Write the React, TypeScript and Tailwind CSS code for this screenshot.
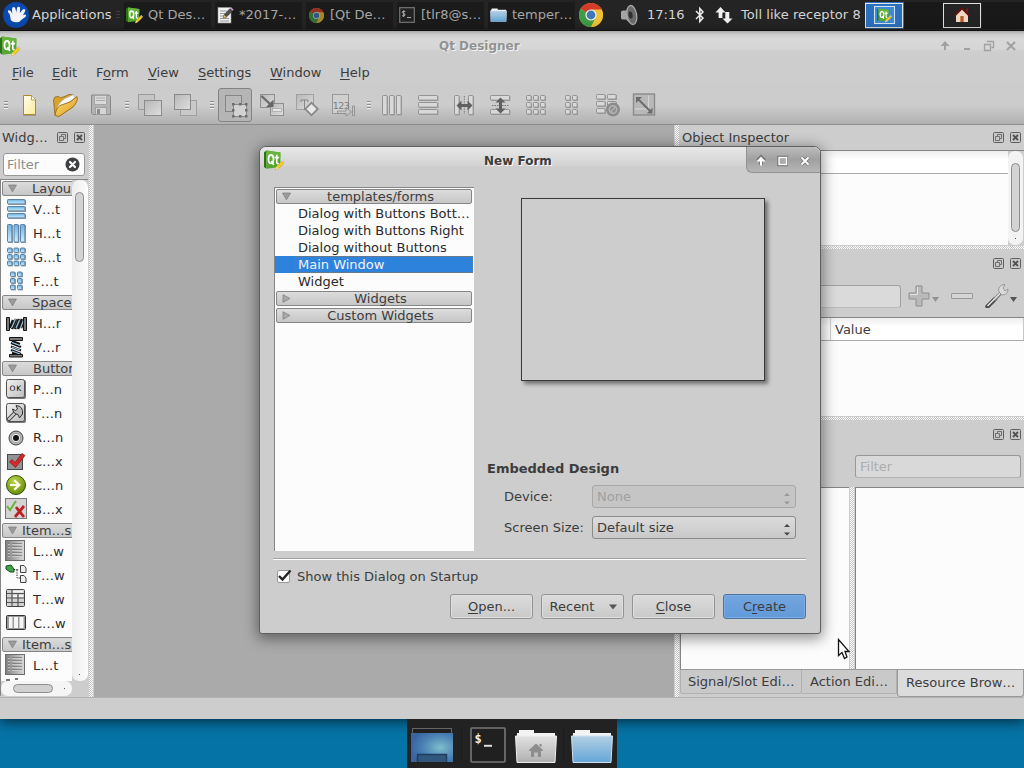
import React from "react";

type IconProps = { size?: number; className?: string };
type Box = { children: React.ReactNode; w: number; h: number; className?: string };

function Svg({ children, w, h, className = "" }: Box) {
  return (
    <svg width={w} height={h} viewBox={`0 0 ${w} ${h}`} className={`block shrink-0 ${className}`}>
      {children}
    </svg>
  );
}

function Gradients() {
  return (
    <svg width="0" height="0" className="absolute">
      <defs>
        <linearGradient id="tile" x1="0" y1="0" x2="1" y2="1">
          <stop offset="0" stopColor="#b7b7b7" />
          <stop offset="1" stopColor="#dedede" />
        </linearGradient>
        <linearGradient id="blue" x1="0" y1="0" x2="0" y2="1">
          <stop offset="0" stopColor="#68b0e2" />
          <stop offset="1" stopColor="#d2f0ff" />
        </linearGradient>
        <linearGradient id="paper" x1="0" y1="0" x2="1" y2="1">
          <stop offset="0" stopColor="#fffef0" />
          <stop offset="1" stopColor="#fbeb98" />
        </linearGradient>
        <linearGradient id="gold" x1="0" y1="0" x2="1" y2="1">
          <stop offset="0" stopColor="#ffe27a" />
          <stop offset="1" stopColor="#d99a1c" />
        </linearGradient>
        <linearGradient id="metal" x1="0" y1="0" x2="1" y2="0">
          <stop offset="0" stopColor="#808080" />
          <stop offset="1" stopColor="#dadada" />
        </linearGradient>
        <linearGradient id="button" x1="0" y1="0" x2="1" y2="1">
          <stop offset="0" stopColor="#f2f2f2" />
          <stop offset="1" stopColor="#bdbdbd" />
        </linearGradient>
        <linearGradient id="folderBlue" x1="0" y1="0" x2="0" y2="1">
          <stop offset="0" stopColor="#b4cfe4" />
          <stop offset="1" stopColor="#64a6d8" />
        </linearGradient>
        <linearGradient id="folderGray" x1="0" y1="0" x2="0" y2="1">
          <stop offset="0" stopColor="#e2e2e2" />
          <stop offset="1" stopColor="#b0b0b0" />
        </linearGradient>
        <radialGradient id="desk" cx="0.7" cy="0.5" r="0.7">
          <stop offset="0" stopColor="#7dbdcc" />
          <stop offset="0.6" stopColor="#4b82b4" />
          <stop offset="1" stopColor="#3a65a2" />
        </radialGradient>
        <radialGradient id="go" cx="0.4" cy="0.3" r="0.8">
          <stop offset="0" stopColor="#bcd648" />
          <stop offset="1" stopColor="#5f8404" />
        </radialGradient>
      </defs>
    </svg>
  );
}

function QtIcon({ size = 20, className = "" }: IconProps) {
  return (
    <svg width={size} height={size} viewBox="0 0 21 21" className={`block shrink-0 ${className}`}>
      <path d="M0 2.2 2.4 0.6V18.8L0 17Z" fill="#2c7317" />
      <path d="M2.4 0.6 16.4 2.4V17L2.4 18.8Z" fill="#53a72c" />
      <path d="M2.4 0.6 16.4 2.4V8L2.4 10Z" fill="#66b53a" />
      <ellipse cx="7" cy="9.2" rx="2.5" ry="4.2" fill="none" stroke="#fff" strokeWidth="1.8" />
      <path d="M7.4 11 9.8 15" stroke="#fff" strokeWidth="1.6" />
      <path d="M12.8 4.8V12.6Q12.8 14 14.8 13.6M10.8 7.6H15" fill="none" stroke="#fff" strokeWidth="1.6" />
      <path d="M11.5 19.8 12.6 16.6 17.8 11.2 20 13.2 14.4 18.6Z" fill="#f5cf1d" stroke="#d19b14" strokeWidth="0.5" />
      <path d="M17.8 11.2 19 9.9 21 12 20 13.2Z" fill="#e9b9cf" />
      <path d="M11.5 19.8 12.6 16.6 14.4 18.6Z" fill="#f4dcae" />
    </svg>
  );
}

function Chrome({ size = 24 }: IconProps) {
  return (
    <svg width={size} height={size} viewBox="0 0 24 24" className="block shrink-0">
      <circle cx="12" cy="12" r="12" fill="#e8b42c" />
      <path d="M12 12 1.6 6A12 12 0 0 1 22.4 6L23 7.4H12Z" fill="#d43b2b" />
      <path d="M12 12 1.6 6A12 12 0 0 0 12 24L17 15Z" fill="#3f9b45" />
      <path d="M12 6.6H22.7A12 12 0 0 1 12 24L16.6 14.8Z" fill="#f0c132" />
      <circle cx="12" cy="12" r="5.6" fill="#f2f2f2" />
      <circle cx="12" cy="12" r="4.4" fill="#3f78b5" />
    </svg>
  );
}

function Terminal() {
  return (
    <Svg w={16} h={16}>
      <rect x="0.7" y="0.7" width="14.6" height="14.6" fill="#222" stroke="#777" strokeWidth="1.2" />
      <path d="M6.3 4.4H4.2Q3 4.4 3.4 5.6L5.8 7Q6.4 8.8 4.8 8.8H3M4.7 3.2V10M8 10.5H12" stroke="#aaa" fill="none" />
    </Svg>
  );
}

function Note() {
  return (
    <Svg w={17} h={17}>
      <rect x="1" y="0.5" width="13" height="15.5" fill="#f2f2f2" stroke="#999" strokeWidth="0.6" />
      <path d="M3 4H10M3 6.5H8M3 9H7M3 11.5H12M3 14H12" stroke="#999" />
      <path d="M6.2 11 7 8 13 1.5 15.8 3.8 9.4 10Z" fill="#4f4f4f" stroke="#262626" strokeWidth="0.6" />
      <path d="M13 1.5 14.2 0.4 16.6 2.6 15.8 3.8Z" fill="#d6a3d9" />
      <path d="M6.2 11 7 8 9.4 10Z" fill="#edc565" />
    </Svg>
  );
}

function Folder({ w, h, home }: { w: number; h: number; home?: boolean }) {
  return (
    <svg width={w} height={h} viewBox="0 0 42 34" className="block shrink-0">
      <path d="M2 8V4H4V1H19V4H40V8Z" fill="#f3f3f3" />
      <path d="M0.5 7H41.5L40 33.5H2Z" fill={home ? "url(#folderGray)" : "url(#folderBlue)"} stroke={home ? "#eee" : "#cfe2ef"} strokeWidth="1" />
      {home && <path d="M21 14.5 28 21V22H26V28H22.8V23.5H19.2V28H16V22H14V21ZM24.5 15H26.5V18L24.5 17Z" fill="#8d8d8d" />}
    </svg>
  );
}

function TaskButton({ icon, label }: { icon: React.ReactNode; label: string }) {
  return (
    <div className="mr-1 flex h-[27px] w-[87px] shrink-0 items-center bg-[#1b1b1b] pl-[2px] text-[#a6a6a6]">
      <span className="flex w-[22px] shrink-0">{icon}</span>
      <span className="whitespace-nowrap pb-[2px]">{label}</span>
    </div>
  );
}

function TopPanel() {
  return (
    <div className="flex h-[31px] shrink-0 items-center border-b border-[#141414] bg-[#242424] text-[#d4d4d4]">
      <div className="ml-[3px] w-[26px]">
        <Svg w={26} h={26}>
          <circle cx="13" cy="13" r="13" fill="#0a4bb0" />
          <path d="M5 8.5Q7 7.5 8.5 10L9.3 12 9 8Q8.8 5.2 10.6 5 12 4.8 12.6 7.3L13.3 10.5 14 6.2Q14.4 4.4 16 4.8 17.5 5.2 17.1 7.2L16.8 11 19.5 7.7Q21 6.4 22 7.5 22.8 8.3 21.7 10L19.8 13.5Q22 12 23 13 23.6 14 22 15.2L18.8 17.5Q16 21 12.5 20.2 7 19.5 7.5 16L6.5 11.8Q4.3 10.4 5 8.5Z" fill="#f4f4f4" />
        </Svg>
      </div>
      <span className="ml-[3px] w-[83px] pb-[2px]">Applications</span>
      <Svg w={9} h={12}><path d="M1 2.5H5M1 5.5H5M1 8.5H5" stroke="#3d3d3d" /></Svg>
      <TaskButton icon={<QtIcon size={17} />} label="Qt Des…" />
      <TaskButton icon={<Note />} label="*2017-…" />
      <TaskButton icon={<span className="ml-[1px] opacity-65"><Chrome size={15} /></span>} label="[Qt De…" />
      <TaskButton icon={<Terminal />} label="[tlr8@s…" />
      <TaskButton icon={<Folder w={17} h={14} />} label="temper…" />
      <Chrome />
      <Svg w={18} h={22} className="ml-[17px]">
        <path d="M1 8Q1 6.5 3 6.5H6L11 2V20L6 15.5H3Q1 15.5 1 14Z" fill="#a5a5a5" />
        <ellipse cx="11.8" cy="11" rx="4.8" ry="9.6" fill="#6b6b6b" stroke="#a9a9a9" strokeWidth="1.3" transform="rotate(-10 11.8 11)" />
        <ellipse cx="10.6" cy="11" rx="2" ry="3.6" fill="#303030" transform="rotate(-10 10.6 11)" />
      </Svg>
      <span className="ml-[9px] w-[48px] pb-[2px]">17:16</span>
      <Svg w={10} h={18}><path d="M1 5 8 12 4.8 15.5V2.5L8 6 1 13" fill="none" stroke="#ededed" strokeWidth="1.5" /></Svg>
      <Svg w={18} h={18} className="ml-[10px]">
        <path d="M0.5 6.5 5.5 1 10.5 6.5H7.4V12H3.6V6.5ZM7.5 12.5H10.3V6H14.3V12.5H17.5L12.5 17.5Z" fill="#f0f0f0" />
      </Svg>
      <span className="ml-[8px] w-[124px] whitespace-nowrap pb-[2px] tracking-[0.05px]">Toll like receptor 8</span>
      <div className="flex h-[27px] w-[39px] items-start border-b-2 border-[#28547f] bg-[#2b70bd]">
        <div className="mt-[1px] flex h-[25px] w-[38px] items-center justify-center border border-[#e4e4e4]">
          <div className="flex h-[18px] w-[21px] items-center justify-center border border-[#d4e4f5] bg-[#3989df]"><QtIcon size={15} /></div>
        </div>
      </div>
      <div className="h-[27px] w-[39px] bg-[#191919]" />
      <div className="flex h-[25px] w-[38px] items-center justify-center border border-[#e0e0e0]">
        <Svg w={16} h={16}>
          <path d="M2 8 8 2 14 8V15H2Z" fill="#efd9c3" />
          <path d="M0.8 8.5 8 1.4 15.2 8.5" fill="none" stroke="#651010" strokeWidth="2" />
          <path d="M12 1.5H14V6L12 4Z" fill="#74201a" />
          <rect x="6.3" y="9" width="3.4" height="6" fill="#b95e2d" />
        </Svg>
      </div>
      <div className="ml-[1px] h-[27px] grow bg-[#191919]" />
    </div>
  );
}

function Grip() {
  return <Svg w={4} h={10}><path d="M0 1.5H4M0 4.5H4M0 7.5H4" stroke="#8d8d8d" /><path d="M0 2.5H4M0 5.5H4M0 8.5H4" stroke="#eee" /></Svg>;
}

function Tiles({ rects, fill, stroke }: { rects: number[][]; fill: string; stroke: string }) {
  return <>{rects.map(([x, y, w, h], i) => <rect key={i} x={x} y={y} width={w} height={h} rx="0.8" fill={fill} stroke={stroke} strokeWidth="1" />)}</>;
}

const gridRects = (xs: number[], ys: number[], w: number, h: number) => ys.flatMap((y) => xs.map((x) => [x, y, w, h]));
const columns = gridRects([1.5, 8.5, 15.5], [1.5], 4.6, 19);
const rows = gridRects([1.5], [1.5, 8.5, 15.5], 19, 4.6);
const grid9 = gridRects([1.5, 8.5, 15.5], [1.5, 8.5, 15.5], 4.6, 4.6);
const grid6 = gridRects([4.5, 11.5], [1.5, 8.5, 15.5], 4.6, 4.6);

function Gray({ rects }: { rects: number[][] }) {
  return (
    <>
      {rects.map(([x, y, w, h], i) => <rect key={i} x={x + 0.5} y={y + 0.5} width={w + 0.4} height={h + 0.4} fill="#9a9a9a" />)}
      <Tiles rects={rects} fill="#d8d8d8" stroke="#949494" />
    </>
  );
}

const toolbarIcons: Record<string, React.ReactNode> = {
  new: (
    <>
      <path d="M5 3H14L18 7V22H5Z" fill="#00000030" />
      <path d="M5.5 1.5H13.5L17.5 5.5V20.5H5.5Z" fill="url(#paper)" stroke="#a98a2c" />
      <path d="M13.5 1.5V6H17.5" fill="#fff" stroke="#a98a2c" strokeWidth="0.8" />
    </>
  ),
  open: (
    <>
      <path d="M-0.5 6 1 3 5 2.5 6.5 4 13 1.5 15 0.5 19 0.8 4 21.5 1 21Z" fill="#d9a22a" stroke="#8e6410" strokeWidth="0.8" />
      <path d="M3 13Q8 5 13 3.5L19.5 0.5 21 4 8 13 4 18Z" fill="#f6f6f6" stroke="#a9a9a9" strokeWidth="0.6" />
      <path d="M1 21.5Q2 14 6 11.5L16 8 23 2.5Q24.5 7 19 13L5 22.5Z" fill="url(#gold)" stroke="#99690f" strokeWidth="0.9" />
    </>
  ),
  save: (
    <>
      <path d="M1.5 1H19L20.5 2.5V20.5H3L1.5 19Z" fill="#b3b3b3" stroke="#898989" />
      <rect x="4.5" y="1.5" width="12" height="9" fill="#dadada" stroke="#999" strokeWidth="0.7" />
      <path d="M6 4H15M6 6.5H15" stroke="#aaa" />
      <rect x="5.5" y="13.5" width="11" height="7" fill="#d6d6d6" stroke="#929292" strokeWidth="0.7" />
      <rect x="7" y="15" width="3" height="5" fill="#8c8c8c" />
    </>
  ),
  front: (
    <>
      <rect x="-0.5" y="0.5" width="16" height="15" fill="#c5c5c5" stroke="#9b9b9b" />
      <rect x="5.5" y="6.5" width="17" height="15" fill="url(#tile)" stroke="#8b8b8b" />
    </>
  ),
  back: (
    <>
      <rect x="5.5" y="6.5" width="16" height="15" fill="#c9c9c9" stroke="#9f9f9f" />
      <rect x="-0.5" y="0.5" width="16" height="15" fill="url(#tile)" stroke="#8b8b8b" />
    </>
  ),
  widgets: (
    <>
      <rect x="1.5" y="1.5" width="16" height="16" fill="#b9b9b9" stroke="#858585" />
      <rect x="9.5" y="10.5" width="13" height="12" fill="#d2d2d2" stroke="#888" />
      {[9, 16, 22].flatMap((x) => [10, 16, 22].map((y) => (x === 16 && y === 16 ? null : <rect key={`${x}-${y}`} x={x - 1} y={y - 1} width="2.5" height="2.5" fill="#6d6d6d" />)))}
    </>
  ),
  signals: (
    <>
      <rect x="0.5" y="0.5" width="14" height="13" fill="url(#tile)" stroke="#8f8f8f" />
      <rect x="10.5" y="9.5" width="13" height="12" fill="url(#tile)" stroke="#8f8f8f" />
      <rect x="12.5" y="14.5" width="9" height="3" fill="#e6e6e6" stroke="#999" strokeWidth="0.6" />
      <path d="M1.5 2 10 10" stroke="#6a6a6a" strokeWidth="2.2" />
      <path d="M13.5 13V5.5L6 13Z" fill="#666" />
    </>
  ),
  buddies: (
    <>
      <rect x="0.5" y="0.5" width="17" height="15" fill="url(#tile)" stroke="#a0a0a0" />
      <path d="M5 8V6H12V8M8.5 6V16" stroke="#888" fill="none" />
      <path d="M15.5 7.5 23 15 15.5 22.5 8 15Z" fill="#888" />
      <path d="M15.5 10 20.5 15 15.5 20 10.5 15Z" fill="#e8e8e8" />
    </>
  ),
  taborder: (
    <>
      <rect x="0.5" y="0.5" width="16" height="19" fill="#d0d0d0" stroke="#999" />
      <text x="0.7" y="15" fontSize="9.5" fill="#7d7d7d" fontFamily="DejaVu Sans, sans-serif" textLength="17">123</text>
      <path d="M5.5 17H14V13.5L19.5 18 14 22V19.5H5.5ZM20.5 12V21.5H22.5V12Z" fill="#c7c7c7" stroke="#888" strokeWidth="0.8" />
    </>
  ),
  columns: <Gray rects={columns} />,
  rows: <Gray rects={rows} />,
  hsplit: (
    <>
      <Gray rects={gridRects([1.5, 15.5], [1.5], 4.6, 19)} />
      <path d="M11.3 2V20" stroke="#777" strokeDasharray="1.5 1" />
      <path d="M3.5 11.5 8.5 6.5V10H14.5V6.5L19.5 11.5 14.5 16.5V13H8.5V16.5Z" fill="#606060" />
    </>
  ),
  vsplit: (
    <>
      <Gray rects={gridRects([1.5], [1.5, 15.5], 19, 4.6)} />
      <path d="M3 11.5H20" stroke="#777" strokeDasharray="1.5 1" />
      <path d="M11.5 3.5 16.5 8.5H13V14.5H16.5L11.5 19.5 6.5 14.5H10V8.5H6.5Z" fill="#606060" />
    </>
  ),
  grid: <Gray rects={grid9} />,
  form: <Gray rects={grid6} />,
  breakl: (
    <>
      <Gray rects={[[-0.5, 0.5, 8.5, 4.5], [10.5, 0.5, 8.5, 4.5], [-0.5, 7.5, 8.5, 4.5], [10.5, 7.5, 8.5, 4.5], [-0.5, 14.5, 8.5, 4.5]]} />
      <circle cx="16" cy="15.5" r="7" fill="#8c8c8c" />
      <circle cx="16" cy="15.5" r="3.7" fill="none" stroke="#b4b4b4" strokeWidth="1.5" />
      <path d="M13.5 18 18.5 13" stroke="#b4b4b4" strokeWidth="1.5" />
    </>
  ),
  adjust: (
    <>
      <rect x="0.5" y="0" width="21" height="21" fill="#b8b8b8" stroke="#8b8b8b" strokeWidth="1.4" />
      <path d="M1.5 15H15.5V1.5M15 15V20" stroke="#d6d6d6" fill="none" />
      <path d="M4 4 18 18" stroke="#6c6c6c" strokeWidth="2" />
      <path d="M3 3H9L3 9ZM19.5 19.5H13.5L19.5 13.5Z" fill="#6c6c6c" />
    </>
  ),
};

function ToolButton({ name, pressed }: { name: string; pressed?: boolean }) {
  return (
    <div className={`flex h-[34px] shrink-0 items-center justify-center ${pressed ? "mx-[1px] w-[34px] rounded-[3px] border border-[#838383] bg-[#b5b5b5]" : "w-9"}`}>
      <svg width="23" height="23" viewBox="0 0 23 23" className="block overflow-visible">{toolbarIcons[name]}</svg>
    </div>
  );
}

function Toolbar() {
  const gap = <div className="flex w-[13px] justify-center pl-[3px]"><Grip /></div>;
  return (
    <div className="flex h-[40px] shrink-0 items-center border-b border-[#8c8c8c] bg-linear-to-b from-[#cbcbcb] via-[#cdcdcd] via-50% to-[#b1b1b1] pt-[1px]">
      <div className="flex w-[11px] pl-1"><Grip /></div>
      {["new", "open", "save"].map((n) => <ToolButton key={n} name={n} />)}
      {gap}
      {["front", "back"].map((n) => <ToolButton key={n} name={n} />)}
      {gap}
      <ToolButton name="widgets" pressed />
      {["signals", "buddies", "taborder"].map((n) => <ToolButton key={n} name={n} />)}
      {gap}
      {["columns", "rows", "hsplit", "vsplit", "grid", "form", "breakl", "adjust"].map((n) => <ToolButton key={n} name={n} />)}
    </div>
  );
}

function Mn({ text, at }: { text: string; at: number }) {
  return <>{text.slice(0, at)}<span className="underline decoration-1 underline-offset-[2px]">{text[at]}</span>{text.slice(at + 1)}</>;
}

function TitleBar() {
  return (
    <div className="flex h-[29px] shrink-0 items-start bg-[linear-gradient(to_bottom,#a6a6a6_0,#c9c9c9_3px,#d8d8d8_8px,#d6d6d6_18px,#cecece_20px,#cdcdcd_29px)] pt-[5px]">
      <div className="w-[439px]"><QtIcon size={21} /></div>
      <div className="w-[501px] text-[12px] font-bold leading-[21px] text-[#929292] [text-shadow:1px_1px_0_#f4f4f4]">Qt Designer</div>
      <Svg w={80} h={22}>
        <path d="M4 14V10H0.5L5 5 9.5 10H6V14Z" fill="#a1a1a1" />
        <rect x="24" y="12" width="6" height="2" fill="#a1a1a1" />
        <path d="M47.5 6V5.5H53.5V11.5H51.5M44.5 8.5H50.5V14.5H44.5Z" fill="none" stroke="#a1a1a1" strokeWidth="1.3" />
        <path d="M67 6 75 14M75 6 67 14" stroke="#a1a1a1" strokeWidth="2" />
      </Svg>
    </div>
  );
}

function MenuBar() {
  const items: [string, number, string][] = [
    ["File", 0, "w-[40px]"], ["Edit", 0, "w-[44px]"], ["Form", 1, "w-[52px]"], ["View", 0, "w-[50px]"],
    ["Settings", 0, "w-[72px]"], ["Window", 0, "w-[70px]"], ["Help", 0, "w-[50px]"],
  ];
  return (
    <div className="flex h-[25px] shrink-0 pl-3 leading-[26px]">
      {items.map(([t, at, w]) => <span key={t} className={w}><Mn text={t} at={at} /></span>)}
    </div>
  );
}

function DockButtons() {
  return (
    <Svg w={28} h={11}>
      <rect x="0.5" y="0.5" width="10" height="10" rx="1" fill="#c8c8c8" stroke="#606060" />
      <path d="M4.5 2.5H8.5V6.5H6.5V8.5H2.5V4.5H4.5ZM4.5 4.5H6.5V6.5" fill="none" stroke="#666" strokeWidth="0.9" />
      <rect x="17.5" y="0.5" width="10" height="10" rx="1" fill="#c8c8c8" stroke="#606060" />
      <path d="M20 3 25 8M25 3 20 8" stroke="#505050" strokeWidth="1.8" />
    </Svg>
  );
}

function VSplit() {
  return <div className="w-[6px] shrink-0 bg-[#cdcdcd] px-[1px]"><div className="h-full bg-[conic-gradient(#fff_25%,#c4c4c4_0_50%,#fff_0_75%,#c4c4c4_0)] bg-[length:2px_2px]" /></div>;
}
function HSplit() {
  return <div className="h-[6px] shrink-0 bg-[#cdcdcd] pt-[1px]"><div className="h-[3px] bg-[conic-gradient(#fff_25%,#c4c4c4_0_50%,#fff_0_75%,#c4c4c4_0)] bg-[length:2px_2px]" /></div>;
}

function Category({ label, open = true, align }: { label: string; open?: boolean; align: string }) {
  return (
    <div className="flex h-[15px] min-w-0 grow items-center rounded-[2px] border border-[#868686] bg-linear-to-b from-[#dcdcdc] to-[#c7c7c7] pl-[5px] leading-[13px]">
      <Svg w={9} h={9}>
        {open ? <path d="M0.5 1H8.5L4.5 7.8Z" fill="#9b9b9b" stroke="#7b7b7b" strokeWidth="0.7" /> : <path d="M1 0.7 8 4.5 1 8.3Z" fill="#a8a8a8" stroke="#7b7b7b" strokeWidth="0.7" />}
      </Svg>
      <span className={`whitespace-nowrap text-[#3c3c3c] ${align}`}>{label}</span>
    </div>
  );
}

const blueTiles = (rects: number[][]) => (
  <>
    {rects.map(([x, y, w, h], i) => <rect key={i} x={x + 0.5} y={y + 0.5} width={w + 0.5} height={h + 0.5} fill="#8894a0" />)}
    <Tiles rects={rects} fill="url(#blue)" stroke="#5c80a4" />
  </>
);

const listIcon = (
  <>
    <rect x="0.5" y="0.5" width="19" height="20" fill="url(#metal)" stroke="#6d6d6d" />
    <path d="M3 3.5H5M3 6.5H5M3 9.5H5M3 12.5H5M3 15.5H5M7 3.5H17M7 6.5H17M7 9.5H17M7 12.5H17M7 15.5H17" stroke="#777" strokeWidth="0.8" />
    <path d="M3 4.5H5M3 7.5H5M3 10.5H5M3 13.5H5M3 16.5H5M7 4.5H17M7 7.5H17M7 10.5H17M7 13.5H17M7 16.5H17" stroke="#d6d6d6" strokeWidth="0.7" />
  </>
);
const button = <><rect x="2" y="2" width="19" height="19" rx="2" fill="#777" /><rect x="1.5" y="1.5" width="18" height="18" rx="2" fill="url(#button)" stroke="#505050" /></>;

const widgetIcons: Record<string, React.ReactNode> = {
  v: blueTiles(gridRects([2.5], [1.5, 8.5, 15.5], 17.5, 4.4)),
  h: blueTiles(gridRects([2.5, 9, 15.5], [2.5], 4.4, 17.5)),
  g: blueTiles(gridRects([2.5, 9, 15.5], [2, 8.5, 15], 4.4, 4.4)),
  f: blueTiles(gridRects([5.5, 12.5], [2, 8.5, 15], 4.4, 4.4)),
  hs: (
    <>
      <path d="M5 16 8 8M7 17 11 7M10 17 14 7M13 17 17 7M16 16 19 8" stroke="#151515" strokeWidth="2.6" fill="none" />
      <path d="M6.5 16 10.5 7M11 16 14.5 8M15.5 16 18.5 8" stroke="#9cc7df" strokeWidth="1.2" />
      <path d="M1.5 5.5H4.5V18.5H1.5ZM18.5 5.5H21.5V18.5H18.5Z" fill="#777" stroke="#151515" />
    </>
  ),
  vs: (
    <>
      <path d="M7 5 15 8M6 7 16 11M6 10.5 16 14.5M6 14 16 18M7 17 13 19" stroke="#151515" strokeWidth="2.4" fill="none" />
      <path d="M7 6.5 15 9.5M7 11 15 14M7 15 15 18" stroke="#9cc7df" strokeWidth="1.2" />
      <path d="M4.5 1.5H17.5V4.5H4.5ZM4.5 18.5H17.5V21H4.5Z" fill="#777" stroke="#151515" />
    </>
  ),
  ok: <>{button}<text x="4.6" y="12.6" fontSize="7.5" fill="#000" fontFamily="DejaVu Sans, sans-serif" textLength="11.5">OK</text></>,
  tool: (
    <>
      {button}
      <path d="M4 17 10 11" stroke="#444" strokeWidth="4" strokeLinecap="round" /><path d="M4 17 10 11" stroke="#d0d0d0" strokeWidth="2.2" strokeLinecap="round" />
      <path d="M11 3.5 12.5 7 10.5 8.5 7.5 7Q8 11 11 12L13 12.5 14.5 16 17.5 12Q18.5 4 11 3.5Z" fill="#bcbcbc" stroke="#333" />
    </>
  ),
  radio: <><circle cx="11" cy="12" r="7" fill="#b5b5b5" stroke="#414141" /><circle cx="11" cy="12" r="4.6" fill="#eee" stroke="#888" strokeWidth="0.7" /><circle cx="11" cy="12" r="3" fill="#111" /></>,
  check: <><rect x="2.5" y="4.5" width="15" height="15" fill="#929292" stroke="#474747" /><path d="M4.5 12 7 9.5 10 12.5 17 3.5 20 5.5 10.5 17.5Z" fill="#d62929" stroke="#861515" strokeWidth="0.7" /></>,
  go: <><circle cx="11" cy="11" r="9.5" fill="url(#go)" stroke="#38500b" /><path d="M5 10H11.5L8.5 7 10 5.5 16 11 10 16.5 8.5 15 11.5 12H5Z" fill="#fafbe6" /></>,
  box: <><rect x="0.5" y="0.5" width="21" height="20" fill="#d3d3d3" stroke="#777" /><path d="M2 8 5 12 11 3" fill="none" stroke="#66b537" strokeWidth="2" /><path d="M11 9 19 19M19 8 10 19" stroke="#bd2020" strokeWidth="2.8" /></>,
  list: listIcon,
  tree: (
    <>
      <path d="M1 2 6 1 9 5V8H5L1 5Z" fill="#44a04a" stroke="#12541a" /><path d="M9 5.5H14M12 6V14H15" stroke="#222" strokeDasharray="1.2 1.2" fill="none" />
      <path d="M15.5 1.5H19L21 4V8.5H15.5ZM15.5 11.5H19L21 14V18.5H15.5Z" fill="#eee" stroke="#444" />
    </>
  ),
  table: <><rect x="1.5" y="1.5" width="18" height="17" rx="1" fill="#d1d1d1" stroke="#444" /><path d="M2 5.5H19M2 10H19M2 14.5H19M7 2V18M13 6V18" stroke="#555" strokeWidth="1.2" /><path d="M8 3.5H18M8 8H12M14 8H18" stroke="#f2f2f2" strokeWidth="1.8" /></>,
  cols: <><rect x="1.5" y="3.5" width="19" height="14" rx="1" fill="#999" stroke="#333" /><path d="M4 5H7.5V16H4ZM9 5H13V16H9ZM14.5 5H18.5V16H14.5Z" fill="#f5f5f5" /></>,
};

function WidgetItems({ items }: { items: [string, string][] }) {
  return (
    <>
      {items.map(([icon, label], i) => (
        <div key={i} className="flex h-6 shrink-0 items-center pl-1 text-[#2c2c2c]">
          <svg width="22" height="22" viewBox="0 0 22 22" className="mr-[6px] shrink-0">{widgetIcons[icon]}</svg>
          <span>{label}</span>
        </div>
      ))}
    </>
  );
}

function WidgetBox() {
  const groups: { label: string; align: string; items: [string, string][] }[] = [
    { label: "Layou", align: "ml-[15px]", items: [["v", "V…t"], ["h", "H…t"], ["g", "G…t"], ["f", "F…t"]] },
    { label: "Space", align: "ml-[15px]", items: [["hs", "H…r"], ["vs", "V…r"]] },
    { label: "Buttor", align: "ml-[16px]", items: [["ok", "P…n"], ["tool", "T…n"], ["radio", "R…n"], ["check", "C…x"], ["go", "C…n"], ["box", "B…x"]] },
    { label: "Item…s", align: "ml-[5px]", items: [["list", "L…w"], ["tree", "T…w"], ["table", "T…w"], ["cols", "C…w"]] },
    { label: "Item…s", align: "ml-[5px]", items: [["list", "L…t"]] },
  ];
  return (
    <div className="flex w-[88px] shrink-0 flex-col bg-[#cdcdcd]">
      <div className="flex h-[25px] shrink-0 items-center justify-between pl-[2px] pr-[3px]"><span>Widg…</span><DockButtons /></div>
      <div className="mx-[3px] mt-[3px] flex h-[23px] w-[82px] shrink-0 items-center justify-between rounded-[3px] border border-[#999] bg-[#fcfcfc] pl-[3px] pr-1 text-[#8e8e8e]">
        <span>Filter</span>
        <Svg w={15} h={15}><circle cx="7.5" cy="7.5" r="7" fill="#3f4042" /><path d="M5 5 10 10M10 5 5 10" stroke="#fff" strokeWidth="2.2" strokeLinecap="round" /></Svg>
      </div>
      <div className="mt-[3px] flex h-[502px] shrink-0 border-l border-t border-[#858585]">
        <div className="flex w-[71px] shrink-0 flex-col overflow-hidden bg-[#fcfcfc]">
          {groups.map((g, i) => (
            <React.Fragment key={i}>
              <div className={`flex shrink-0 overflow-hidden pl-[1px] ${i === 0 ? "h-[17px] pt-[1px]" : "h-[18px] pt-[2px]"}`}>
                <div className="flex w-[82px] shrink-0"><Category label={g.label} align={g.align} /></div>
              </div>
              <WidgetItems items={g.items} />
            </React.Fragment>
          ))}
          <Svg w={40} h={5}><path d="M5 3H9M14 2H17" stroke="#777" strokeWidth="2" /></Svg>
        </div>
        <div className="flex w-4 flex-col items-center justify-between rounded-[7px] bg-linear-to-r from-[#ededed] to-[#fcfcfc] pr-[2px] pb-[6px] pt-3">
          <div className="h-[70px] w-[9px] rounded-[5px] border border-[#8e8e8e] bg-[#d3d3d3]" />
          <div className="size-[1px] bg-[#555]" />
        </div>
      </div>
      <div className="flex h-[15px] shrink-0 border-l border-[#858585]">
        <div className="flex w-[71px] items-center justify-between rounded-[7px] bg-[#f5f5f5] pl-3 pr-[7px]"><div className="h-[9px] w-10 rounded-[5px] border border-[#8e8e8e] bg-[#d0d0d0]" /><div className="size-[1px] bg-[#555]" /></div>
      </div>
    </div>
  );
}

function DockTitle({ label = "" }: { label?: string }) {
  return <div className="flex h-[25px] shrink-0 items-center justify-between pl-[2px] pr-[3px]"><span>{label}</span><DockButtons /></div>;
}

function RightDocks() {
  return (
    <div className="flex w-[344px] shrink-0 flex-col bg-[#cdcdcd]">
      <DockTitle label="Object Inspector" />
      <div className="flex h-[95px] shrink-0 border-l border-t border-[#858585] bg-[#fcfcfc]">
        <div className="grow"><div className="h-[23px] border-b border-[#aaa] bg-linear-to-b from-[#eee] to-[#fff] to-40%" /></div>
        <div className="flex w-4 shrink-0 bg-[#cdcdcd]">
          <div className="flex w-[15px] flex-col items-center justify-between rounded-[7px] bg-[#f3f3f3] pb-[6px] pt-3">
            <div className="h-[69px] w-[9px] rounded-[5px] border border-[#8e8e8e] bg-[#d3d3d3]" />
            <div className="size-[1px] bg-[#555]" />
          </div>
        </div>
      </div>
      <HSplit />
      <DockTitle />
      <div className="mt-[7px] flex h-[26px] shrink-0 items-center">
        <div className="h-[23px] w-[221px] rounded-[3px] border border-[#a0a0a0] border-b-[#bbb] bg-[#dadada]" />
        <Svg w={120} h={24} className="ml-[3px]">
          <path d="M12 2H18V9H25V15H18V22H12V15H5V9H12Z" fill="#b9b9b9" stroke="#8e8e8e" />
          <path d="M13.5 3V10.5H6" stroke="#e5e5e5" fill="none" />
          <path d="M28 13H35L31.5 18Z" fill="#929292" />
          <rect x="47.5" y="9.5" width="21" height="5" rx="0.5" fill="#d5d5d5" stroke="#989898" />
          <path d="M83.5 22.5 91 15" stroke="#4a4a4a" strokeWidth="4.4" strokeLinecap="round" /><path d="M90 16 98 8" stroke="#7d7d7d" strokeWidth="3.4" /><path d="M83.5 22 98 7.5" stroke="#e8e8e8" strokeWidth="1.5" />
          <path d="M95 8Q93 2 101 0L99 4 101 7 104 5Q104 11 98 11Z" fill="#dadada" stroke="#8c8c8c" strokeWidth="0.8" />
          <path d="M106 13H113L109.5 18Z" fill="#555" />
        </Svg>
      </div>
      <div className="mt-[8px] h-[99px] shrink-0 border-l border-t border-[#858585] bg-[#fcfcfc]">
        <div className="flex h-[23px] border-b border-[#aaa] bg-linear-to-b from-[#eee] to-[#fff] to-40%">
          <div className="w-[150px] border-r border-[#d0d0d0]" /><span className="grow border-r border-[#c8c8c8] pl-1 leading-[23px]">Value</span>
        </div>
      </div>
      <HSplit />
      <DockTitle />
      <div className="mt-[8px] flex h-[23px] shrink-0 justify-end pr-[3px]"><div className="w-[166px] rounded-[3px] border border-[#989898] border-b-[#b4b4b4] bg-[#d9d9d9] pl-1 leading-[21px] text-[#adadad]">Filter</div></div>
      <div className="mt-[9px] flex h-[183px] shrink-0 border-b border-[#999]">
        <div className="w-[169px] border-l border-t border-[#858585] bg-[#fcfcfc]" /><VSplit /><div className="grow border-l border-t border-[#858585] bg-[#fcfcfc]" />
      </div>
      <div className="flex items-start whitespace-nowrap">
        <div className="h-6 w-[122px] rounded-b-[3px] border border-t-0 border-[#b0b0b0] bg-[#c9c9c9] pl-[7px] leading-6">Signal/Slot Edi…</div>
        <div className="h-6 w-[95px] border border-l-0 border-t-0 border-[#b0b0b0] bg-[#c9c9c9] pl-[8px] leading-6">Action Edi…</div>
        <div className="h-[27px] grow rounded-b-[3px] border border-t-0 border-[#999] bg-[#dcdcdc] pl-[8px] leading-[26px]">Resource Brow…</div>
      </div>
    </div>
  );
}

function Combo({ label, disabled }: { label: string; disabled?: boolean }) {
  return (
    <div className={`flex h-[23px] w-[204px] items-center justify-between rounded-[3px] border pl-1 pr-[5px] ${disabled ? "border-[#a8a8a8] bg-[#c5c5c5] text-[#a0a0a0]" : "border-[#8b8b8b] bg-linear-to-b from-[#dcdcdc] to-[#c8c8c8]"}`}>
      <span>{label}</span>
      <Svg w={6} h={16}><path d="M0 7H6L3 4ZM0 12.5H6L3 15.5Z" fill={disabled ? "#999" : "#444"} /></Svg>
    </div>
  );
}

function DialogButton({ children, primary }: { children: React.ReactNode; primary?: boolean }) {
  return (
    <div className={`flex h-[25px] w-[83px] items-center justify-center rounded-[3px] border ${primary ? "border-[#4b74a2] bg-linear-to-b from-[#73a6e1] to-[#6299d8] shadow-[inset_0_0_0_1px_#7badE4]" : "border-[#939393] bg-linear-to-b from-[#dcdcdc] to-[#c9c9c9] shadow-[inset_0_0_0_1px_#dfdfdf]"}`}>
      {children}
    </div>
  );
}

function NewFormDialog() {
  const forms = ["Dialog with Buttons Bott…", "Dialog with Buttons Right", "Dialog without Buttons", "Main Window", "Widget"];
  return (
    <div className="absolute left-[259px] top-[146px] flex h-[488px] w-[562px] flex-col rounded-t-[7px] rounded-b-[3px] border border-[#606060] bg-[#cdcdcd] shadow-[0_3px_14px_2px_rgba(0,0,0,0.42)]">
      <div className="flex h-[26px] shrink-0 items-start rounded-t-[6px] bg-linear-to-b from-[#e8e8e8] to-[#d2d2d2] bg-[length:100%_19px] bg-no-repeat">
        <div className="w-[224px] pl-1 pt-[3px]"><QtIcon size={21} /></div>
        <div className="w-[262px] text-[12px] font-bold leading-[29px] [text-shadow:1px_1px_0_#fafafa]">New Form</div>
        <div className="h-[26px] w-[74px] rounded-bl-[6px] rounded-tr-[6px] border-b border-l border-[#929292] bg-linear-to-b from-[#bdbdbd] via-[#a0a0a0] to-[#b6b6b6]">
          <Svg w={73} h={25}>
            <g stroke="#717171" strokeWidth="3.5" fill="none"><path d="M14 18V12.5M10.5 13.5 14 10 17.5 13.5M32 10.5H39V17.5H32ZM54.5 10.5 61.5 17.5M61.5 10.5 54.5 17.5" /></g>
            <path d="M13 18.5V14.5H9.5L14 9.5 18.5 14.5H15V18.5Z" fill="#fff" />
            <rect x="32" y="10.5" width="7.5" height="7" fill="#aaa" stroke="#fff" strokeWidth="1.4" />
            <path d="M54.5 10.5 61.5 17.5M61.5 10.5 54.5 17.5" stroke="#fff" strokeWidth="2" />
          </Svg>
        </div>
      </div>
      <div className="mt-[14px] flex h-[364px] shrink-0 pl-[14px]">
        <div className="w-[200px] shrink-0 border-l border-t border-[#858585] bg-[#fcfcfc]">
          <div className="flex h-[17px] items-center pl-[1px] pr-[2px]"><Category label="templates/forms" align="grow pr-[1px] text-center" /></div>
          {forms.map((f) => (
            <div key={f} className={`mr-[1px] flex h-[17px] items-center whitespace-nowrap pl-5 ${f === "Main Window" ? "bg-[#2d82dc] text-[#f4f4f4]" : "text-[#292929]"}`}>
              <span className={`h-[17px] grow pl-[3px] leading-[17px] ${f === "Main Window" ? "outline-1 -outline-offset-1 outline-dotted outline-[#6b7b8e]" : ""}`}>{f}</span>
            </div>
          ))}
          {["Widgets", "Custom Widgets"].map((c) => <div key={c} className="flex h-[17px] items-center pl-[1px] pr-[2px]"><Category open={false} label={c} align="grow pr-[1px] text-center" /></div>)}
        </div>
        <div className="ml-[13px] flex flex-col">
          <div className="ml-[34px] mt-[11px] h-[183px] w-[244px] border border-[#3a3a3a] shadow-[3px_3px_4px_0_rgba(0,0,0,0.45)]" />
          <div className="mt-[75px] font-bold leading-[25px]">Embedded Design</div>
          <div className="mt-[4px] flex items-center pl-[17px]"><span className="w-[88px]">Device:</span><Combo label="None" disabled /></div>
          <div className="mt-[8px] flex items-center pl-[17px]"><span className="w-[88px]">Screen Size:</span><Combo label="Default size" /></div>
        </div>
      </div>
      <div className="ml-[13px] mr-[14px] mt-[7px] h-[2px] shrink-0 border-b border-t border-b-[#fff] border-t-[#a3a3a3]" />
      <div className="mt-[6px] flex h-[20px] shrink-0 items-center pl-4">
        <Svg w={17} h={16}><rect x="1.5" y="2.5" width="12" height="12" rx="1.5" fill="#fcfcfc" stroke="#999" /><path d="M3 8 6.5 11.5 14.5 2.5" fill="none" stroke="#222" strokeWidth="2.4" /></Svg>
        <span className="ml-1">Show this Dialog on Startup</span>
      </div>
      <div className="mt-[8px] flex justify-end gap-2 pr-[14px]">
        <DialogButton><span><Mn text="Open..." at={0} /></span></DialogButton>
        <DialogButton><span className="ml-[2px] mr-[15px]">Recent</span><Svg w={8} h={6}><path d="M0 0.5H8L4 5.5Z" fill="#555" /></Svg></DialogButton>
        <DialogButton><span><Mn text="Close" at={0} /></span></DialogButton>
        <DialogButton primary><span><Mn text="Create" at={1} /></span></DialogButton>
      </div>
    </div>
  );
}

function Launcher() {
  return (
    <div className="mx-auto flex h-[49px] w-[210px] shrink-0 items-center bg-[#222]">
      <Svg w={42} h={36} className="ml-[4px] mt-[3px]">
        <rect x="1.5" y="1.5" width="39" height="33" fill="#202020" stroke="#666" />
        <rect x="0" y="6" width="42" height="29" fill="url(#desk)" />
        <path d="M6.5 35V27.5H35.5V35" fill="#31587c" stroke="#203e5c" strokeWidth="1.5" />
      </Svg>
      <div className="mx-[8px] h-8 w-[1px] shrink-0 bg-[#1d1d1d]" />
      <Svg w={36} h={36} className="mt-[2px]">
        <rect x="1" y="1" width="34" height="34" rx="1" fill="#202020" stroke="#777" strokeWidth="1.6" />
        <text x="4.5" y="16" fontSize="12" fontWeight="bold" fill="#eee" fontFamily="DejaVu Sans Mono, monospace">$</text>
        <path d="M14 18.8H22" stroke="#ddd" strokeWidth="2" />
      </Svg>
      <div className="ml-[9px] mt-[5px] shrink-0"><Folder w={42} h={34} home /></div>
      <div className="ml-[6px] mr-[7px] h-8 w-[1px] shrink-0 bg-[#1d1d1d]" />
      <div className="mt-[5px] shrink-0"><Folder w={42} h={34} /></div>
    </div>
  );
}

export default function App() {
  return (
    <div className="relative flex h-[768px] w-[1024px] flex-col overflow-hidden bg-[#0673a6] text-[13px] leading-[17px] text-[#3c3c3c] [font-family:'DejaVu_Sans',sans-serif]">
      <Gradients />
      <TopPanel />
      <div className="flex h-[688px] shrink-0 flex-col bg-[#cdcdcd] shadow-[0_3px_12px_rgba(0,0,0,0.6)]">
        <TitleBar />
        <MenuBar />
        <Toolbar />
        <div className="flex h-[572px] shrink-0">
          <WidgetBox />
          <VSplit />
          <div className="grow bg-[#aaaaaa]" />
          <VSplit />
          <RightDocks />
        </div>
        <div className="h-[22px] border-t border-[#b3b3b3]" />
      </div>
      <Launcher />
      <NewFormDialog />
      <Svg w={14} h={22} className="absolute left-[836px] top-[638px]">
        <path d="M2.5 1.5V17.5L6 14.5 8.5 20.5 11 19 9 13.5H13Z" fill="#fff" stroke="#111" strokeWidth="1.3" />
      </Svg>
    </div>
  );
}
